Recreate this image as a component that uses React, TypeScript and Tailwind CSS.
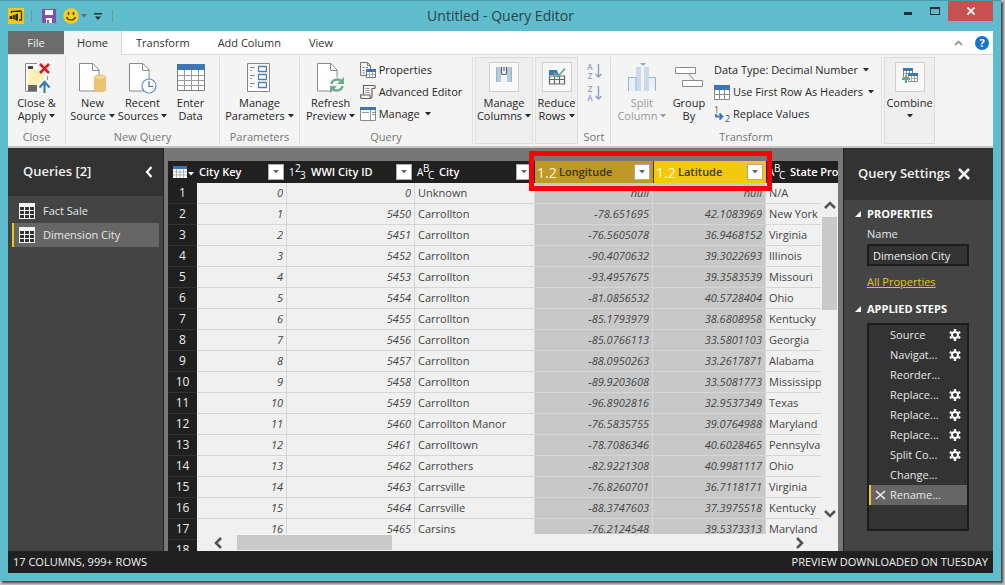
import type { ReactNode } from "react";
import { clsx } from "clsx";

const rows = [
  ["0", "0", "Unknown", "null", "null", "N/A"],
  ["1", "5450", "Carrollton", "-78.651695", "42.1083969", "New York"],
  ["2", "5451", "Carrollton", "-76.5605078", "36.9468152", "Virginia"],
  ["3", "5452", "Carrollton", "-90.4070632", "39.3022693", "Illinois"],
  ["4", "5453", "Carrollton", "-93.4957675", "39.3583539", "Missouri"],
  ["5", "5454", "Carrollton", "-81.0856532", "40.5728404", "Ohio"],
  ["6", "5455", "Carrollton", "-85.1793979", "38.6808958", "Kentucky"],
  ["7", "5456", "Carrollton", "-85.0766113", "33.5801103", "Georgia"],
  ["8", "5457", "Carrollton", "-88.0950263", "33.2617871", "Alabama"],
  ["9", "5458", "Carrollton", "-89.9203608", "33.5081773", "Mississippi"],
  ["10", "5459", "Carrollton", "-96.8902816", "32.9537349", "Texas"],
  ["11", "5460", "Carrollton Manor", "-76.5835755", "39.0764988", "Maryland"],
  ["12", "5461", "Carrolltown", "-78.7086346", "40.6028465", "Pennsylvania"],
  ["13", "5462", "Carrothers", "-82.9221308", "40.9981117", "Ohio"],
  ["14", "5463", "Carrsville", "-76.8260701", "36.7118171", "Virginia"],
  ["15", "5464", "Carrsville", "-88.3747603", "37.3975518", "Kentucky"],
  ["16", "5465", "Carsins", "-76.2124548", "39.5373313", "Maryland"],
  ["17", "", "", "", "", ""],
];

const steps = [
  { label: "Source", gear: true },
  { label: "Navigat...", gear: true },
  { label: "Reorder...", gear: false },
  { label: "Replace...", gear: true },
  { label: "Replace...", gear: true },
  { label: "Replace...", gear: true },
  { label: "Split Co...", gear: true },
  { label: "Change...", gear: false },
  { label: "Rename...", gear: false, active: true },
];

function Caret({ className }: { className?: string }) {
  return (
    <svg width="6" height="4" viewBox="0 0 6 4" className={clsx("inline-block shrink-0", className)} aria-hidden>
      <path d="M0 0h6L3 3.6z" fill="currentColor" />
    </svg>
  );
}

/* ---------- ribbon icons ---------- */

function CloseApplyIcon() {
  return (
    <svg width="28" height="32" viewBox="0 0 28 32" fill="none">
      <path d="M2 1h13v30H2z" fill="#fff" />
      <path d="M14 1.500H2.500v28H14" stroke="#8a8a8a" />
      <path d="M5 8h16v8l-7 7H5z" fill="#fdf0b0" />
      <path d="M5 4h5v3H5z" fill="#444" />
      <path d="M5 23h9v6H5z" fill="#666" />
      <path d="M24.500 14v4" stroke="#999" />
      <path d="m17 2 9 9m0-9-9 9" stroke="#cf2027" strokeWidth="2.600" />
      <path d="M21.500 31V20m-5 5.500 5-5.500 5 5.500" stroke="#3d7ab8" strokeWidth="2.200" />
    </svg>
  );
}

function PageOutline() {
  return (
    <>
      <path d="M1.500 1.500H15l6 6.500v21H1.500z" fill="#fff" stroke="#8a8a8a" />
      <path d="M14.500 2v6.500H21" stroke="#8a8a8a" fill="none" />
    </>
  );
}

function NewSourceIcon() {
  return (
    <svg width="30" height="32" viewBox="0 0 30 32">
      <PageOutline />
      <path d="M16 15h12v13c0 3-12 3-12 0z" fill="#ecc273" />
      <ellipse cx="22" cy="15.500" rx="6" ry="2.500" fill="#f5d795" stroke="#dfb05a" strokeWidth=".7" />
    </svg>
  );
}

function RecentIcon() {
  return (
    <svg width="30" height="32" viewBox="0 0 30 32">
      <PageOutline />
      <circle cx="21" cy="24" r="7" fill="#fff" stroke="#5b8fc4" strokeWidth="1.200" />
      <path d="M21 19v5.500h4.500" fill="none" stroke="#3f76b3" strokeWidth="1.200" />
    </svg>
  );
}

function EnterDataIcon() {
  return (
    <svg width="30" height="32" viewBox="0 0 30 32">
      <path d="M1.500 2.500h27v26h-27z" fill="#fff" stroke="#7d7d7d" />
      <path d="M1 2h28v6H1z" fill="#3d75b5" />
      <path d="M2 13.500h26M2 18.500h26M2 23.500h26M8.500 8v20M15.500 8v20M22.500 8v20" stroke="#9a9a9a" />
    </svg>
  );
}

function ParametersIcon() {
  return (
    <svg width="24" height="32" viewBox="0 0 24 32" fill="none">
      <path d="M.500 1.500h22v28H.500z" fill="#fff" stroke="#888" />
      <path d="M3 5.500h5M3 8.500h2M3 13.500h5M3 16.500h2M3 21.500h5M3 24.500h2" stroke="#8a8a8a" />
      <path d="M11.500 4.500h8v5h-8zM11.500 12.500h8v5h-8zM11.500 20.500h8v5h-8z" stroke="#4b82bd" strokeWidth="1.300" />
    </svg>
  );
}

function RefreshIcon() {
  return (
    <svg width="30" height="32" viewBox="0 0 30 32">
      <PageOutline />
      <circle cx="21" cy="23" r="8" fill="#f4f4f4" />
      <g fill="none" stroke="#6fab8f" strokeWidth="2.400">
        <path d="M15.500 22c.8-5 8-6 10.500-2" />
        <path d="M26.500 24c-.8 5-8 6-10.500 2" />
      </g>
      <path d="M28 15v7h-7zM14 31v-7h7z" fill="#6fab8f" />
    </svg>
  );
}

function PropertiesIcon() {
  return (
    <svg width="16" height="16" viewBox="0 0 16 16" fill="none">
      <path d="M.500.500h7l3 3v4M.500.500v13H6" stroke="#777" />
      <path d="M7.500.500v3h3" stroke="#777" />
      <path d="M2.500 5.500h2M2.500 8.500h2M2.500 11h2M6 5.500h2" stroke="#777" />
      <path d="M6.500 7.500h9v8h-9z" fill="#fff" stroke="#777" />
      <path d="M6 7h10v3H6z" fill="#3d75b5" />
      <path d="M9.500 10v5M12.500 10v5M7 12.500h8" stroke="#aaa" />
    </svg>
  );
}

function ScriptIcon() {
  return (
    <svg width="16" height="16" viewBox="0 0 16 16" fill="none">
      <path d="M3.500 11V1.500h11c1 0 1 3 0 3H12v8c0 2-2 2-2 0V11H.500c0 4 1 3.500 2 3.500H11" stroke="#666" strokeWidth="1.200" />
      <path d="M5.500 4.500h4M5.500 6.500h4M5.500 8.500h4" stroke="#999" />
    </svg>
  );
}

function ManageIcon() {
  return (
    <svg width="16" height="16" viewBox="0 0 16 16" fill="none">
      <path d="M.500 1.500h15v13H.500z" fill="#fff" stroke="#888" />
      <path d="M0 1h16v3H0z" fill="#3d75b5" />
      <path d="M10.500 4v10M2 6.500h7M12 6.500h3M12 8.500h3" stroke="#999" />
    </svg>
  );
}

function ColumnsIcon() {
  return (
    <svg width="18" height="18" viewBox="0 0 18 18" fill="none" className="-mt-1">
      <path d="M2 1h4v15H2zM12 1h4v15h-4z" fill="#b3cce4" />
      <path d="M1.500 1v15M16.500 1v15" stroke="#9fb2c6" />
      <path d="M6.500 1v6c0 1 1 1.500 2.500 1.500s2.500-.5 2.500-1.500V1M9 1v4" stroke="#666" strokeWidth="1.200" />
    </svg>
  );
}

function ReduceRowsIcon() {
  return (
    <svg width="18" height="18" viewBox="0 0 18 18" fill="none">
      <path d="M1 2h16v5H1z" fill="#3d75b5" />
      <path d="M8 0h10v7h-7z" fill="#f8f8f8" />
      <path d="M1.500 8v8h15V8zM1 11.500h15M6.500 8v8M11.500 8v8" stroke="#666" strokeWidth="1.200" />
      <path d="m6 4.500 4 4 7-8" stroke="#62ae8d" strokeWidth="1.800" />
    </svg>
  );
}

function SortIcon({ top, bottom }: { top: string; bottom: string }) {
  return (
    <span className="flex h-[18px] items-center gap-px text-[#8f9fbc]">
      <span className="flex w-[7px] flex-col text-center text-[8px] font-semibold leading-[9px]">
        <span>{top}</span>
        <span>{bottom}</span>
      </span>
      <svg width="7" height="16" viewBox="0 0 7 16">
        <path d="M3.500 1v13m-3-3 3 3 3-3" fill="none" stroke="currentColor" strokeWidth="1.400" />
      </svg>
    </span>
  );
}

function SplitColumnIcon() {
  return (
    <svg width="30" height="32" viewBox="0 0 30 32">
      <path d="M9 5h5v24H9zM17 5h5v24h-5z" fill="#ccd9ea" />
      <path d="M9 29V15.500H1.500V29M22 15.500h6.500V29" fill="#e6eef8" stroke="#9db5d4" />
      <path d="M13 1h6l-3 3z" fill="#97a6bb" />
    </svg>
  );
}

function GroupByIcon() {
  return (
    <svg width="30" height="32" viewBox="0 0 30 32" fill="none" stroke="#8a8a8a">
      <path d="M1.500 5.500h20v6h-20zM8.500 18.500h20v6h-20z" fill="#fff" />
      <path d="m14.500 11.500 6 7" />
    </svg>
  );
}

function HeadersIcon() {
  return (
    <svg width="16" height="16" viewBox="0 0 16 16">
      <path d="M.500 5.500h15v10H.500z" fill="#fff" />
      <path d="M0 1h16v5H0z" fill="#3d75b5" />
      <path d="M.500 6v9.500h15V6M0 10.500h16M5.500 6v9M10.500 6v9" fill="none" stroke="#8a8a8a" />
    </svg>
  );
}

function ReplaceIcon() {
  return (
    <svg width="16" height="17" viewBox="0 0 16 17" className="overflow-visible">
      <g className="font-['Open_Sans',sans-serif] text-[9px]" fill="#555">
        <text x="0" y="7">1</text>
        <text x="11" y="16">2</text>
      </g>
      <path d="M2 8v2.500h6M5.500 7.500l3 3-3 3" fill="none" stroke="#3d75b5" strokeWidth="1.800" />
    </svg>
  );
}

function CombineIcon() {
  return (
    <svg width="18" height="18" viewBox="0 0 18 18" fill="none" className="-mt-1">
      <path d="M2.500 2.500h9v9h-9z" fill="#fff" stroke="#8a8a8a" />
      <path d="M2 2h10v3H2z" fill="#3d75b5" />
      <path d="M5.500 5v5M8.500 5v5M3 7.500h8" stroke="#999" />
      <path d="M7.500 7.500h9v8h-9z" fill="#fff" stroke="#8a8a8a" />
      <path d="M7 7h10v3H7z" fill="#3d75b5" />
      <path d="M10.500 10v5M13.500 10v5M8 12.500h8" stroke="#aaa" />
      <path d="M5 9v8M1 13h8" stroke="#62a88a" strokeWidth="2" />
    </svg>
  );
}

function GearIcon() {
  return (
    <svg width="12" height="12" viewBox="0 0 12 12" aria-hidden>
      <circle cx="6" cy="6" r="3" fill="none" stroke="#fff" strokeWidth="2" />
      <path
        d="M6 0v2M6 10v2M.800 3l1.800 1M9.400 8l1.800 1M.800 9l1.800-1M9.400 4l1.800-1"
        stroke="#fff"
        strokeWidth="2.400"
      />
    </svg>
  );
}

function QueryTableIcon() {
  return (
    <svg width="16" height="16" viewBox="0 0 16 16" aria-hidden>
      <path d="M0 0h16v16H0z" fill="#f4f4f4" />
      <path
        d="M1 4h4v3H1zM6 4h4v3H6zM11 4h4v3h-4zM1 8h4v3H1zM6 8h4v3H6zM11 8h4v3h-4zM1 12h4v3H1zM6 12h4v3H6zM11 12h4v3h-4z"
        fill="#333"
      />
    </svg>
  );
}

function TypeIcon({ glyphs }: { glyphs: string }) {
  return (
    <svg width="18" height="18" viewBox="0 0 18 18" className="shrink-0 overflow-visible" aria-hidden>
      <g className="font-['Open_Sans',sans-serif] text-[10px] font-normal" fill="#fff">
        <text x="0" y="13">{glyphs[0]}</text>
        <text x="6" y="9">{glyphs[1]}</text>
        <text x="11" y="16">{glyphs[2]}</text>
      </g>
    </svg>
  );
}

/* ---------- ribbon pieces ---------- */

type BigButtonProps = {
  icon: ReactNode;
  lines: string[];
  caret?: boolean;
  disabled?: boolean;
  framed?: boolean;
  className?: string;
};

function BigButton({ icon, lines, caret, disabled, framed, className }: BigButtonProps) {
  return (
    <button
      type="button"
      disabled={disabled}
      className={clsx(
        "flex shrink-0 flex-col items-center whitespace-nowrap leading-[13px]",
        disabled ? "text-[#9a9a9a]" : "text-[#262626]",
        className,
      )}
    >
      <span
        className={clsx(
          "flex items-center justify-center",
          framed ? "mb-1 size-[30px] border border-[#cfcfcf] bg-[#f8f8f8]" : "mb-[2px] h-8",
        )}
      >
        {icon}
      </span>
      <span>{lines[0]}</span>
      <span className="flex h-[13px] items-center gap-[3px]">
        {lines[1]}
        {caret && <Caret />}
      </span>
    </button>
  );
}

function SmallButton({ icon, label, caret }: { icon?: ReactNode; label: string; caret?: boolean }) {
  return (
    <button type="button" className="flex h-[22px] items-center gap-[3px] whitespace-nowrap text-[#262626]">
      {icon}
      <span>{label}</span>
      {caret && <Caret className="ml-[2px]" />}
    </button>
  );
}

function Group({ label, className, children }: { label: string; className: string; children: ReactNode }) {
  return (
    <div className={clsx("flex shrink-0 flex-col justify-between border-r border-[#dedede] pt-[5px]", className)}>
      <div className="flex justify-center">{children}</div>
      <div className="pb-px text-center leading-[13px] text-[#777]">{label}</div>
    </div>
  );
}

function TitleBar() {
  return (
    <header className="relative flex h-[30px] shrink-0 items-start">
      <div className="flex h-[30px] items-center">
        <svg width="16" height="16" viewBox="0 0 16 16" aria-hidden>
          <path d="M0 0h16v16H0z" fill="#f2c811" />
          <path d="M3.500 5V3.500l9-.5 1 1v8h-2.500" fill="none" stroke="#2f2a10" strokeWidth="1.300" />
          <path d="M1.500 8.500 10 5.500v7.500l-5-2H1.500z" fill="#2f2a10" />
          <path d="M4.500 7v4M7 6v6" stroke="#f2c811" strokeWidth=".5" />
        </svg>
        <span className="ml-[7px] h-3 w-px bg-[#77929a]" />
        <button type="button" aria-label="Save" className="ml-[10px]">
          <svg width="14" height="14" viewBox="0 0 14 14">
            <path d="M0 0h14v14H0z" fill="#8150a8" />
            <path d="M3 1h8v5H3zM4 9h6v5H4z" fill="#fff" />
            <path d="M5 11h2v3H5z" fill="#8150a8" />
          </svg>
        </button>
        <button type="button" aria-label="Send a smile" className="ml-[7px] flex items-center gap-[2px] text-[#5d6c70]">
          <svg width="16" height="16" viewBox="0 0 16 16">
            <circle cx="8" cy="8" r="7.800" fill="#f6cf1c" />
            <path d="M5.500 4v3M10.500 4v3" stroke="#443a0a" strokeWidth="1.500" />
            <path d="M3.500 9c1.500 4 7.500 4 9 0" fill="none" stroke="#443a0a" strokeWidth="1.200" />
          </svg>
          <Caret />
        </button>
        <button type="button" aria-label="Customize toolbar" className="ml-[7px]">
          <svg width="8" height="7" viewBox="0 0 8 7">
            <path d="M0 0h8v1.500H0zM1 3.500h6L4 7z" fill="#1f2f33" />
          </svg>
        </button>
        <span className="ml-[10px] h-3 w-px bg-[#77929a]" />
      </div>
      <h1 className="absolute inset-x-0 top-[5px] text-center text-[14px] leading-5 text-[#2c4247]">
        Untitled - Query Editor
      </h1>
      <div className="relative ml-auto flex h-5">
        <button type="button" aria-label="Minimize" className="flex w-[27px] items-center justify-center pt-1">
          <span className="h-[3px] w-2 bg-[#22343a]" />
        </button>
        <button type="button" aria-label="Maximize" className="flex w-[27px] items-center justify-center">
          <span className="h-2 w-[10px] border border-t-2 border-[#22343a]" />
        </button>
        <button type="button" aria-label="Close" className="flex w-[45px] items-center justify-center bg-[#c75050]">
          <svg width="8" height="8" viewBox="0 0 8 8">
            <path d="m.500.500 7 7m0-7-7 7" stroke="#fff" strokeWidth="1.800" />
          </svg>
        </button>
      </div>
    </header>
  );
}

function Tabs() {
  return (
    <nav className="flex h-6 shrink-0 border-b border-[#d8d8d8] bg-white text-[#333]">
      <button type="button" className="w-14 bg-[#6c6c6c] pt-px text-[#eee]">File</button>
      <button type="button" className="-mb-px w-[58px] border-r border-[#d8d8d8] bg-[#f4f4f4] pt-px">Home</button>
      <button type="button" className="px-[14px] pt-[2px]">Transform</button>
      <button type="button" className="px-[14px] pt-[2px]">Add Column</button>
      <button type="button" className="px-[14px] pt-[2px]">View</button>
      <div className="ml-auto flex items-center gap-3 pr-1">
        <button type="button" aria-label="Collapse ribbon">
          <svg width="9" height="6" viewBox="0 0 9 6">
            <path d="m1 5 3.500-3.500L8 5" fill="none" stroke="#999" strokeWidth="1.800" />
          </svg>
        </button>
        <button
          type="button"
          aria-label="Help"
          className="flex size-[14px] items-center justify-center rounded-full bg-[#1673cf] text-[11px] font-bold leading-none text-white"
        >
          ?
        </button>
      </div>
    </nav>
  );
}

function Ribbon() {
  return (
    <section className="flex h-[93px] shrink-0 border-b-2 border-[#c6c6c6] bg-[#f4f4f4] pt-[2px] pb-[2px]">
      <Group label="Close" className="w-[58px]">
        <BigButton icon={<CloseApplyIcon />} lines={["Close &", "Apply"]} caret />
      </Group>
      <Group label="New Query" className="w-[154px]">
        <BigButton icon={<NewSourceIcon />} lines={["New", "Source"]} caret className="w-[50px]" />
        <BigButton icon={<RecentIcon />} lines={["Recent", "Sources"]} caret className="w-[50px]" />
        <BigButton icon={<EnterDataIcon />} lines={["Enter", "Data"]} className="mr-1 w-[46px]" />
      </Group>
      <Group label="Parameters" className="w-20">
        <BigButton icon={<ParametersIcon />} lines={["Manage", "Parameters"]} caret />
      </Group>
      <Group label="Query" className="w-[173px]">
        <BigButton icon={<RefreshIcon />} lines={["Refresh", "Preview"]} caret className="mr-[2px] w-[54px]" />
        <div className="-mt-[3px] mr-[6px] flex flex-col items-start">
          <SmallButton icon={<PropertiesIcon />} label="Properties" />
          <SmallButton icon={<ScriptIcon />} label="Advanced Editor" />
          <SmallButton icon={<ManageIcon />} label="Manage" caret />
        </div>
      </Group>
      <div className="ml-[2px] w-[58px] shrink-0 border border-[#dcdcdc] bg-[#efefef] pt-1">
        <BigButton icon={<ColumnsIcon />} lines={["Manage", "Columns"]} caret framed className="w-full" />
      </div>
      <div className="ml-[2px] w-[43px] shrink-0 border border-[#dcdcdc] bg-[#efefef] pt-1">
        <BigButton icon={<ReduceRowsIcon />} lines={["Reduce", "Rows"]} caret framed className="w-full" />
      </div>
      <Group label="Sort" className="w-[33px]">
        <div className="flex flex-col gap-1">
          <button type="button" aria-label="Sort ascending"><SortIcon top="A" bottom="Z" /></button>
          <button type="button" aria-label="Sort descending"><SortIcon top="Z" bottom="A" /></button>
        </div>
      </Group>
      <Group label="Transform" className="w-[271px]">
        <BigButton icon={<SplitColumnIcon />} lines={["Split", "Column"]} caret disabled className="w-[52px]" />
        <BigButton icon={<GroupByIcon />} lines={["Group", "By"]} className="mr-1 w-[42px]" />
        <div className="-mt-[3px] mr-[2px] flex flex-col items-start">
          <SmallButton label="Data Type: Decimal Number" caret />
          <SmallButton icon={<HeadersIcon />} label="Use First Row As Headers" caret />
          <SmallButton icon={<ReplaceIcon />} label="Replace Values" />
        </div>
      </Group>
      <div className="ml-[2px] w-[51px] shrink-0 border border-[#dcdcdc] bg-[#efefef] pt-1">
        <BigButton icon={<CombineIcon />} lines={["Combine"]} caret framed className="w-full" />
      </div>
    </section>
  );
}

/* ---------- panes ---------- */

function QueriesPane() {
  return (
    <aside className="flex w-[156px] shrink-0 flex-col border-r border-[#222] bg-[#444]">
      <div className="flex h-12 items-center justify-between bg-[#333] pl-[15px] pr-[10px]">
        <h2 className="text-[13px] font-semibold text-[#f2f2f2]">Queries [2]</h2>
        <button type="button" aria-label="Collapse queries">
          <svg width="8" height="12" viewBox="0 0 8 12">
            <path d="M6.500 1 2 6l4.500 5" fill="none" stroke="#fff" strokeWidth="2.200" />
          </svg>
        </button>
      </div>
      <div className="flex flex-col py-[3px] pl-1 pr-1 text-[#e6e6e6]">
        <button type="button" className="flex h-6 items-center gap-2 border-l-2 border-transparent pl-[5px]">
          <QueryTableIcon />
          Fact Sale
        </button>
        <button type="button" className="flex h-6 items-center gap-2 border-l-2 border-[#f2c811] bg-[#666] pl-[5px]">
          <QueryTableIcon />
          Dimension City
        </button>
      </div>
    </aside>
  );
}

type HeadProps = { icon?: ReactNode; label: string; className?: string; filter?: boolean };

function Head({ icon, label, className, filter = true }: HeadProps) {
  return (
    <th scope="col" className={clsx("h-[22px] overflow-hidden p-0 text-left font-semibold", className)}>
      <div className="flex h-[22px] items-center whitespace-nowrap pl-[2px] pr-[3px]">
        {icon}
        <span className={clsx(icon && "ml-1")}>{label}</span>
        {filter && (
          <button
            type="button"
            aria-label={`Filter ${label}`}
            className="ml-auto flex size-4 shrink-0 items-center justify-center border border-[#aaa] bg-white text-[#666]"
          >
            <Caret />
          </button>
        )}
      </div>
    </th>
  );
}

function DecimalIcon() {
  return <span className="w-[18px] text-[14px] font-normal text-[#fff8dc]">1.2</span>;
}

function Grid() {
  return (
    <main className="relative min-w-0 flex-1 bg-[#777] pl-1 pr-[5px] pt-[13px]">
      <div className="relative h-full overflow-hidden bg-[#f0f0f0]">
        <table className="w-full table-fixed border-separate border-spacing-0 text-[11px]">
          <colgroup>
            <col className="w-[29px]" />
            <col className="w-[90px]" />
            <col className="w-[128px]" />
            <col className="w-[120px]" />
            <col className="w-[118px]" />
            <col className="w-[113px]" />
            <col />
          </colgroup>
          <thead className="bg-[#202020] text-white">
            <tr>
              <th className="p-0">
                <button type="button" aria-label="Table options" className="flex items-center gap-px pl-[5px]">
                  <svg width="14" height="12" viewBox="0 0 14 12">
                    <path d="M0 0h14v12H0z" fill="#fff" />
                    <path d="M0 0h14v3H0z" fill="#3d75b5" />
                    <path d="M3.500 3v9M7 3v9M10.500 3v9M0 6h14M0 9h14" stroke="#999" strokeWidth=".7" />
                  </svg>
                  <Caret className="mt-1" />
                </button>
              </th>
              <Head label="City Key" />
              <Head icon={<TypeIcon glyphs="123" />} label="WWI City ID" />
              <Head icon={<TypeIcon glyphs="ABC" />} label="City" />
              <Head icon={<DecimalIcon />} label="Longitude" className="bg-[#bd9925] text-[#40340c]" />
              <Head icon={<DecimalIcon />} label="Latitude" className="border-l border-[#3c330f] bg-[#f2c811] text-[#40380c]" />
              <Head icon={<TypeIcon glyphs="ABC" />} label="State Prov" filter={false} />
            </tr>
          </thead>
          <tbody className="text-[#444]">
            {rows.map((row, i) => (
              <tr key={i}>
                <th scope="row" className="h-[21px] border-b border-[#333] bg-[#202020] p-0 text-center text-[12px] font-normal leading-5 text-[#eee]">
                  {i + 1}
                </th>
                {row.map((value, col) => (
                  <td
                    key={col}
                    className={clsx(
                      "h-[21px] overflow-hidden whitespace-nowrap border-b border-r border-[#d6d6d6] px-[3px] py-0 leading-5",
                      col !== 2 && col !== 5 && "text-right italic",
                      (col === 3 || col === 4) && "bg-[#c8c8c8]",
                    )}
                  >
                    {value}
                  </td>
                ))}
              </tr>
            ))}
          </tbody>
        </table>

        {/* scrollbars float over the last column and the bottom rows */}
        <div className="absolute bottom-0 right-0 top-[22px] flex w-[17px] flex-col items-center bg-[#f0f0f0] pb-8 pt-[17px]">
          <svg width="12" height="10" viewBox="0 0 12 10">
            <path d="m1 8 5-5 5 5" fill="none" stroke="#555" strokeWidth="2.600" />
          </svg>
          <div className="mt-[7px] h-[93px] w-[15px] bg-[#c9c9c9]" />
          <svg width="12" height="10" viewBox="0 0 12 10" className="mt-auto">
            <path d="m1 2 5 5 5-5" fill="none" stroke="#555" strokeWidth="2.600" />
          </svg>
        </div>
        <div className="absolute bottom-0 left-[29px] right-0 flex h-[17px] items-center bg-[#f0f0f0] pl-4 pr-[33px]">
          <svg width="10" height="12" viewBox="0 0 10 12">
            <path d="M8 1 3 6l5 5" fill="none" stroke="#555" strokeWidth="2.600" />
          </svg>
          <div className="ml-[14px] h-[15px] w-[155px] bg-[#c9c9c9]" />
          <svg width="10" height="12" viewBox="0 0 10 12" className="ml-auto">
            <path d="m2 1 5 5-5 5" fill="none" stroke="#555" strokeWidth="2.600" />
          </svg>
        </div>
      </div>
      {/* highlight around the two decimal columns */}
      <div className="pointer-events-none absolute left-[365px] top-[3px] h-10 w-[243px] border-[5px] border-[#fb0007]" />
    </main>
  );
}

function SectionTitle({ children }: { children: ReactNode }) {
  return (
    <h3 className="flex h-5 items-center gap-[6px] font-bold text-white">
      <svg width="6" height="6" viewBox="0 0 6 6" aria-hidden>
        <path d="M6 0v6H0z" fill="#fff" />
      </svg>
      {children}
    </h3>
  );
}

function SettingsPane() {
  return (
    <aside className="flex w-[150px] shrink-0 flex-col border-l border-[#222] bg-[#444] text-[#e6e6e6]">
      <div className="flex h-[52px] items-center gap-2 bg-[#333] pb-px pl-[14px]">
        <h2 className="whitespace-nowrap text-[13px] font-semibold text-[#f2f2f2]">Query Settings</h2>
        <button type="button" aria-label="Close settings">
          <svg width="12" height="12" viewBox="0 0 12 12">
            <path d="m1 1 10 10M11 1 1 11" stroke="#eee" strokeWidth="2.600" />
          </svg>
        </button>
      </div>
      <div className="flex flex-col pl-[11px] pr-6 pt-1">
        <SectionTitle>PROPERTIES</SectionTitle>
        <div className="flex flex-col pl-3">
          <label htmlFor="query-name" className="h-5 leading-5">Name</label>
          <input
            id="query-name"
            defaultValue="Dimension City"
            className="h-[22px] w-full border-2 border-[#1c1c1c] bg-[#333] px-1 text-[#eee] outline-none"
          />
          <a href="#properties" className="mt-1 h-6 leading-6 text-[#e6c01e] underline">All Properties</a>
        </div>
        <div className="mt-[5px]">
          <SectionTitle>APPLIED STEPS</SectionTitle>
        </div>
        <ul className="ml-3 mt-1 h-[208px] border-2 border-[#1c1c1c] bg-[#333]">
          {steps.map((step, i) => (
            <li
              key={i}
              className={clsx(
                "flex h-5 items-center border-l-2 pr-[6px]",
                step.active ? "border-[#f2c811] bg-[#666]" : "border-transparent",
              )}
            >
              <span className="flex w-[19px] shrink-0 justify-center">
                {step.active && (
                  <svg width="11" height="10" viewBox="0 0 11 10" aria-hidden>
                    <path d="m1 1 9 8m0-8L1 9" stroke="#eee" strokeWidth="1.600" />
                  </svg>
                )}
              </span>
              <span className="whitespace-nowrap">{step.label}</span>
              {step.gear && (
                <button type="button" aria-label={`Edit ${step.label}`} className="ml-auto">
                  <GearIcon />
                </button>
              )}
            </li>
          ))}
        </ul>
      </div>
    </aside>
  );
}

export default function App() {
  return (
    <div className="h-screen overflow-hidden bg-[#c4c4c4] pb-1 pr-1 font-['Open_Sans','Noto_Sans',sans-serif] text-[11px]">
      <div className="flex h-full flex-col border-t border-[#4b98a6] bg-[#5ebccd] px-2 pb-2 shadow-[2px_2px_2px_#444]">
        <TitleBar />
        <Tabs />
        <Ribbon />
        <div className="flex min-h-0 flex-1">
          <QueriesPane />
          <Grid />
          <SettingsPane />
        </div>
        <footer className="flex h-[22px] shrink-0 items-center justify-between bg-[#202020] px-[5px] text-[#f2f2f2]">
          <span>17 COLUMNS, 999+ ROWS</span>
          <span>PREVIEW DOWNLOADED ON TUESDAY</span>
        </footer>
      </div>
    </div>
  );
}
